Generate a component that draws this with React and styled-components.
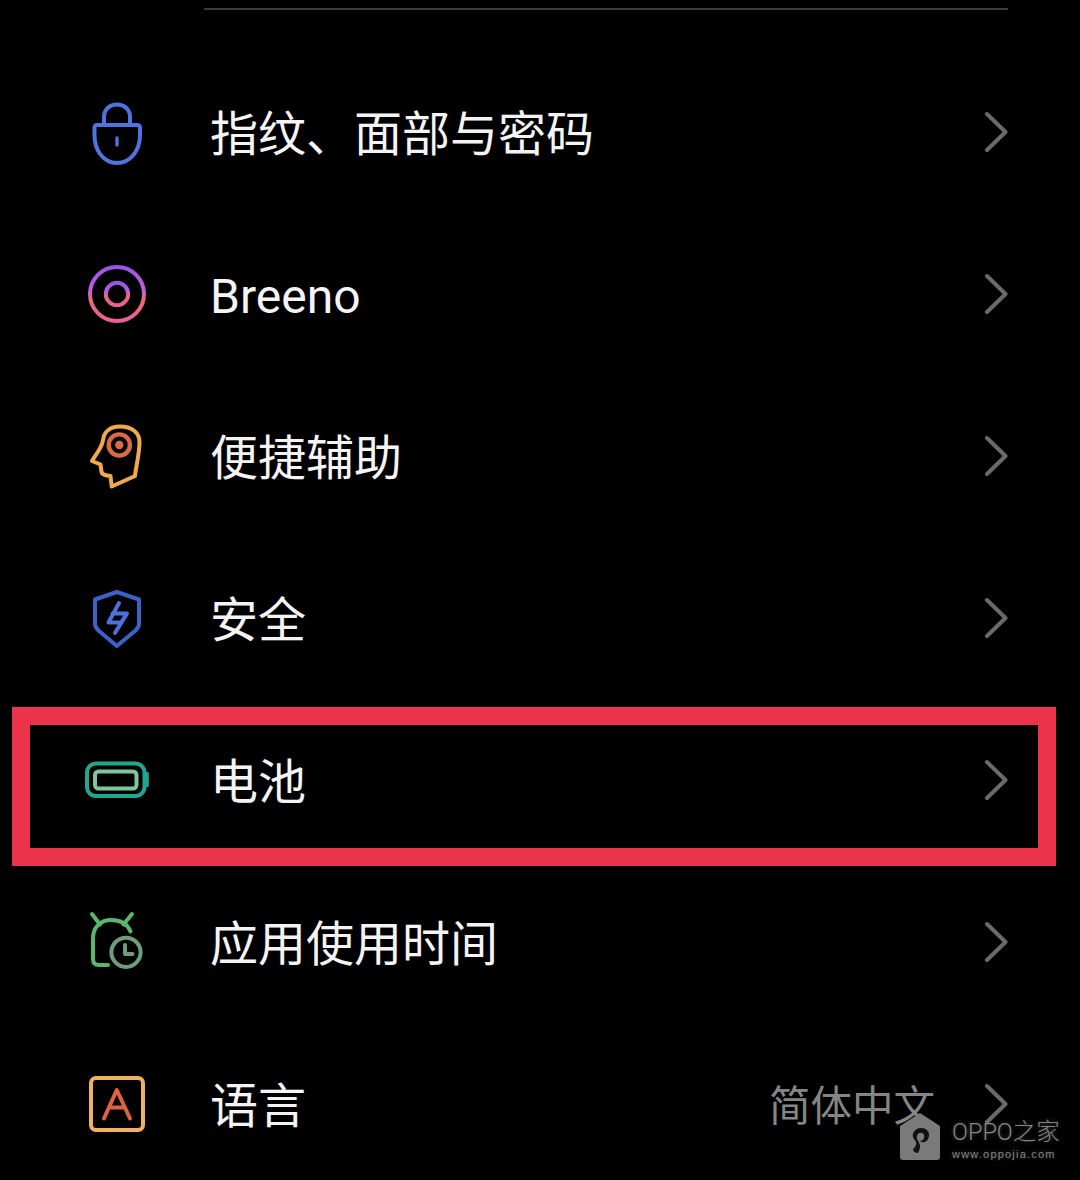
import React from "react";
import styled, { createGlobalStyle } from "styled-components";

const Global = createGlobalStyle`
  html, body { margin: 0; padding: 0; background: #000; }
  body { width: 1080px; height: 1180px; overflow: hidden; }
`;

const Screen = styled.main`
  position: relative;
  width: 1080px;
  height: 1180px;
  overflow: hidden;
  background: #000;
  font-family: Roboto, "Noto Sans CJK SC", sans-serif;
`;

const Divider = styled.hr`
  margin: 8px 72px 0 204px;
  height: 2px;
  border: 0;
  background: #3b3b3b;
`;

const List = styled.ul`
  list-style: none;
  margin: 41px 0 0;
  padding: 0;
`;

const Row = styled.li`
  display: flex;
  align-items: center;
  height: 162px;
  padding: 0 72px 0 77px;
`;

const IconBox = styled.svg`
  flex: none;
  width: 80px;
  height: 80px;
  margin-right: 53px;
  fill: none;
  stroke-width: 4;
  stroke-linecap: round;
  stroke-linejoin: round;
`;

const Label = styled.span`
  flex: 1;
  margin-top: 5px;
  font-size: 48px;
  line-height: 60px;
  color: #f4f4f4;
  white-space: nowrap;
`;

const Value = styled.span`
  margin-right: 49px;
  margin-top: 6px;
  font-size: 41.5px;
  line-height: 60px;
  color: #858585;
  white-space: nowrap;
`;

const Chevron = styled.svg`
  flex: none;
  width: 24px;
  height: 42px;
  fill: none;
  stroke: #6a6a6a;
  stroke-width: 4;
  stroke-linecap: round;
  stroke-linejoin: round;
`;

const Highlight = styled.div`
  position: absolute;
  left: 12px;
  top: 707px;
  width: 1044px;
  height: 159px;
  box-sizing: border-box;
  border: 18px solid #eb344c;
  pointer-events: none;
`;

const Watermark = styled.div`
  position: absolute;
  left: 899px;
  top: 1112px;
  display: flex;
  gap: 11px;
  color: #858585;
  text-shadow: 0 0 4px rgba(255, 255, 255, 0.25);
`;

const WatermarkTag = styled.svg`
  flex: none;
  width: 42px;
  height: 49px;
`;

const WatermarkText = styled.div`
  display: flex;
  flex-direction: column;
  margin-top: 5px;
`;

const WatermarkName = styled.span`
  font-size: 23.5px;
  line-height: 30px;
  white-space: nowrap;
  font-weight: 300;
`;

const WatermarkUrl = styled.span`
  font-family: "Liberation Sans", sans-serif;
  font-size: 11px;
  line-height: 14px;
  letter-spacing: 1.2px;
  white-space: nowrap;
`;

const Lock = () => (
  <IconBox viewBox="0 0 80 80" stroke="#4d74e0">
    <path d="M27 33V25C27 17 33 12.5 40 12.5S53 17 53 25V33" />
    <path d="M20 33H60C62 33 63 34 63 36V43C63 59 53 71 40 71S17.5 59 17.5 43V36C17.5 34 18 33 20 33Z" />
    <path d="M40 46V53" strokeWidth="3.4" />
  </IconBox>
);

const Breeno = () => (
  <IconBox viewBox="0 0 80 80">
    <defs>
      <linearGradient id="breeno" x1="0" y1="0" x2="0" y2="1">
        <stop offset="0" stopColor="#9a55e6" />
        <stop offset="0.45" stopColor="#c65fd8" />
        <stop offset="0.6" stopColor="#e86c72" />
        <stop offset="1" stopColor="#ea5f9a" />
      </linearGradient>
    </defs>
    <circle cx="40" cy="40" r="27" stroke="url(#breeno)" />
    <circle cx="40" cy="40" r="11.2" stroke="url(#breeno)" />
  </IconBox>
);

const Head = () => (
  <IconBox viewBox="0 0 80 80" stroke="#f2a94c">
    <path d="M34.7 70.5L58 60C59 50 62.5 38 62.5 26C62.5 16 54 10.5 43 10.5C33 10.5 27 16 26 24C25 32 19 38 15 45L23.5 48.5L24.5 56C25 58.5 27 59.5 33.5 60Z" />
    <circle cx="42.3" cy="29" r="10.6" stroke="#dc6a45" strokeWidth="4.4" />
    <circle cx="42.3" cy="29" r="4.2" fill="#dc6a45" stroke="none" />
  </IconBox>
);

const Shield = () => (
  <IconBox viewBox="0 0 80 80" stroke="#3a62c8">
    <path d="M39.8 14L62 21.5V46C62 49 60.5 50.5 58.5 52.5L39.8 68L21.5 52.5C19.5 50.5 18 49 18 46V21.5Z" />
    <path d="M42 25L31.5 44.5H44L50 35.5H35.5M50 35.5L38 55" stroke="#4a72dc" />
  </IconBox>
);

const Battery = () => (
  <IconBox viewBox="0 0 80 80" stroke="#20a78f">
    <rect x="10" y="23.5" width="57.5" height="32.5" rx="9" />
    <path d="M70 33.5V45.5" strokeWidth="3.6" />
    <rect x="18" y="31.5" width="41.5" height="17" rx="3.5" stroke="#7ec79a" />
  </IconBox>
);

const Alarm = () => (
  <IconBox viewBox="0 0 80 80" stroke="#5db56c">
    <path d="M31 63H22C18 63 16 61 16 57V36C16 25 24 18 34 18C44 18 50.5 22 53.5 29.5" />
    <path d="M15 12L23 22.5M55 12L46.5 22.5" />
    <circle cx="49" cy="50.3" r="14.6" stroke="#6f9c7c" />
    <path d="M48 43V52H55.5" stroke="#6f9c7c" />
  </IconBox>
);

const Lang = () => (
  <IconBox viewBox="0 0 80 80" stroke="#f2b062">
    <rect x="14" y="14" width="52" height="52" rx="5" />
    <path d="M27 54.5L39.8 26L53 54.5M32.5 43.5H47.5" stroke="#de6240" />
  </IconBox>
);

const rows = [
  { label: "指纹、面部与密码", Icon: Lock },
  { label: "Breeno", Icon: Breeno },
  { label: "便捷辅助", Icon: Head },
  { label: "安全", Icon: Shield },
  { label: "电池", Icon: Battery },
  { label: "应用使用时间", Icon: Alarm },
  { label: "语言", Icon: Lang, value: "简体中文" },
];

export default function App() {
  return (
    <Screen>
      <Global />
      <Divider />
      <List>
        {rows.map(({ label, Icon, value }) => (
          <Row key={label}>
            <Icon />
            <Label>{label}</Label>
            {value && <Value>{value}</Value>}
            <Chevron viewBox="0 0 24 42">
              <path d="M3 3L21.5 21L3 39" />
            </Chevron>
          </Row>
        ))}
      </List>
      <Highlight />
      <Watermark>
        <WatermarkTag viewBox="0 0 42 49">
          <path
            d="M21 1L41 14V45C41 47 40 48 38 48H4C2 48 1 47 1 45V14Z"
            fill="#7a7a7a"
          />
          <path
            d="M19 41C15 41 13 38 15 36C18 33 18 30 15 27C12 23 15 16 22 16C29 16 32 22 29 27C27 31 23 31 21 29C24 29 26 26 25 23C24 20 19 20 18 24C17 28 21 30 21 34C21 37 20 39 19 41Z"
            fill="#111"
          />
        </WatermarkTag>
        <WatermarkText>
          <WatermarkName>OPPO之家</WatermarkName>
          <WatermarkUrl>www.oppojia.com</WatermarkUrl>
        </WatermarkText>
      </Watermark>
    </Screen>
  );
}
